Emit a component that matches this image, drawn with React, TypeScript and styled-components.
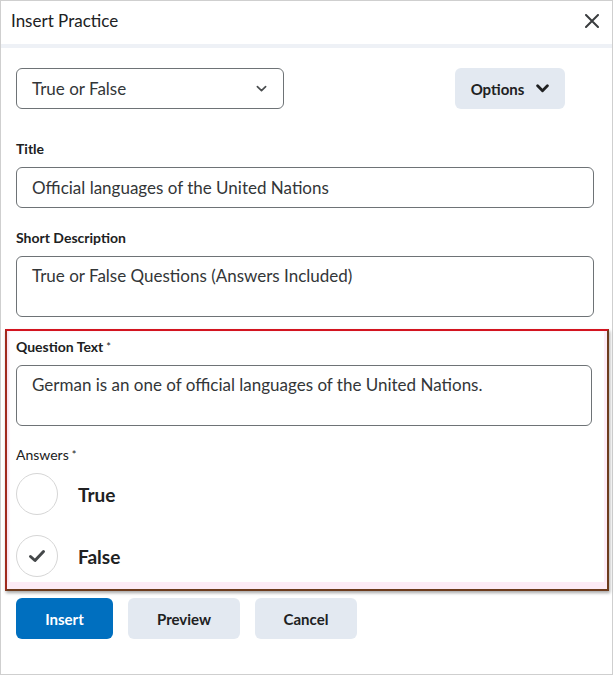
import React from "react";
import styled, { createGlobalStyle } from "styled-components";

const Global = createGlobalStyle`
  html, body { margin: 0; padding: 0; background: #fff; }
  body { font-family: Lato, "Open Sans", "Liberation Sans", sans-serif; color: #202122; }
  * { box-sizing: border-box; }
`;

const Dialog = styled.div`
  width: 613px;
  height: 675px;
  border: 1px solid #cfcfcf;
  background: #fff;
  display: flex;
  flex-direction: column;
`;

const Header = styled.header`
  height: 47px;
  display: flex;
  align-items: center;
  justify-content: space-between;
  padding: 0 12px 4px 10px;
  border-bottom: 4px solid #eef1f6;
`;

const HeaderTitle = styled.h1`
  margin: 0;
  font-size: 17px;
  font-weight: 400;
  color: #202122;
`;

const CloseButton = styled.button`
  border: 0;
  background: none;
  padding: 0;
  width: 16px;
  height: 16px;
  display: flex;
  align-items: center;
  justify-content: center;
  color: #3a3d3f;
`;

const Body = styled.div`
  padding: 20px 18px 0 15px;
  display: flex;
  flex-direction: column;
`;

const TopRow = styled.div`
  display: flex;
  justify-content: space-between;
  align-items: center;
  padding-right: 29px;
`;

const Select = styled.div`
  width: 268px;
  height: 41px;
  border: 1px solid #6e7376;
  border-radius: 6px;
  display: flex;
  align-items: center;
  justify-content: space-between;
  padding: 0 16px 0 15px;
  font-size: 17px;
  color: #333638;
`;

const GreyButton = styled.button<{ $w: number }>`
  width: ${(p) => p.$w}px;
  height: 41px;
  border: 0;
  border-radius: 6px;
  background: #e3e9f1;
  font-family: Lato, "Open Sans", sans-serif;
  font-weight: 700;
  font-size: 15px;
  color: #202122;
  display: flex;
  align-items: center;
  justify-content: center;
  gap: 12px;
  padding: 0;
`;

const PrimaryButton = styled(GreyButton)`
  background: #006fbf;
  color: #fff;
`;

const Field = styled.div<{ $top: number }>`
  margin-top: ${(p) => p.$top}px;
  display: flex;
  flex-direction: column;
`;

const Label = styled.label<{ $light?: boolean }>`
  font-size: 14px;
  font-weight: ${(p) => (p.$light ? 400 : 700)};
  line-height: 18px;
  color: #202122;
  margin-bottom: ${(p) => (p.$light ? 0 : 9)}px;
  display: block;
`;

const Star = styled.span`
  font-weight: 400;
  font-size: 11px;
  vertical-align: top;
  margin-left: 3px;
`;

const Input = styled.div<{ $h: number }>`
  height: ${(p) => p.$h}px;
  border: 1px solid #6e7376;
  border-radius: 6px;
  padding: ${(p) => (p.$h > 50 ? "8px" : "0")} 15px 0;
  display: flex;
  align-items: ${(p) => (p.$h > 50 ? "flex-start" : "center")};
  font-size: 17px;
  color: #333638;
`;

const Highlight = styled.section`
  margin: 12px -15px 0 -11px;
  border: 2px solid #6d3b1d;
  border-top-color: #d3141f;
  border-left-color: #a02a1e;
  box-shadow: 1px 2px 3px rgba(0, 0, 0, 0.35), inset -3px -7px 0 #fdebf6,
    inset 2px 0 2px #fbe3f0;
  padding: 7px 15px 12px 9px;
  display: flex;
  flex-direction: column;
`;

const AnswerList = styled.div`
  display: flex;
  flex-direction: column;
  gap: 20px;
  margin-top: 9px;
`;

const Answer = styled.div`
  display: flex;
  align-items: center;
  gap: 20px;
`;

const Circle = styled.div`
  width: 42px;
  height: 42px;
  border-radius: 50%;
  border: 1px solid #d6d6d6;
  display: flex;
  align-items: center;
  justify-content: center;
  color: #45484a;
`;

const AnswerText = styled.span`
  font-size: 19px;
  font-weight: 700;
  color: #202122;
`;

const Buttons = styled.div`
  display: flex;
  gap: 15px;
  margin-top: 7px;
`;

const Chevron = ({ size = 12, sw = 2 }: { size?: number; sw?: number }) => (
  <svg width={size} height={size * 0.7} viewBox="0 0 12 8" fill="none">
    <path d="M1.5 1.5 L6 6 L10.5 1.5" stroke="currentColor" strokeWidth={sw} strokeLinecap="round" strokeLinejoin="round" />
  </svg>
);

export default function App() {
  return (
    <>
      <Global />
      <Dialog>
        <Header>
          <HeaderTitle>Insert Practice</HeaderTitle>
          <CloseButton aria-label="Close">
            <svg width="14" height="14" viewBox="0 0 14 14">
              <path d="M1 1 L13 13 M13 1 L1 13" stroke="currentColor" strokeWidth="2" strokeLinecap="round" />
            </svg>
          </CloseButton>
        </Header>
        <Body>
          <TopRow>
            <Select>
              <span>True or False</span>
              <span style={{ color: "#494c4e", display: "flex" }}>
                <Chevron size={11} sw={1.8} />
              </span>
            </Select>
            <GreyButton $w={110}>
              Options
              <span style={{ display: "flex" }}>
                <Chevron size={13} sw={2.6} />
              </span>
            </GreyButton>
          </TopRow>
          <Field $top={31}>
            <Label>Title</Label>
            <Input $h={41}>Official languages of the United Nations</Input>
          </Field>
          <Field $top={21}>
            <Label>Short Description</Label>
            <Input $h={61}>True or False Questions (Answers Included)</Input>
          </Field>
          <Highlight>
            <Field $top={0}>
              <Label>
                Question Text<Star>*</Star>
              </Label>
              <Input $h={61}>German is an one of official languages of the United Nations.</Input>
            </Field>
            <Field $top={20}>
              <Label $light>
                Answers<Star>*</Star>
              </Label>
              <AnswerList>
                <Answer>
                  <Circle />
                  <AnswerText>True</AnswerText>
                </Answer>
                <Answer>
                  <Circle>
                    <svg width="18" height="14" viewBox="0 0 18 14">
                      <path d="M2.5 7.5 L7 11.5 L15.5 2.5" stroke="currentColor" strokeWidth="3" fill="none" strokeLinecap="round" strokeLinejoin="round" />
                    </svg>
                  </Circle>
                  <AnswerText>False</AnswerText>
                </Answer>
              </AnswerList>
            </Field>
          </Highlight>
          <Buttons>
            <PrimaryButton $w={97}>Insert</PrimaryButton>
            <GreyButton $w={112}>Preview</GreyButton>
            <GreyButton $w={102}>Cancel</GreyButton>
          </Buttons>
        </Body>
      </Dialog>
    </>
  );
}
